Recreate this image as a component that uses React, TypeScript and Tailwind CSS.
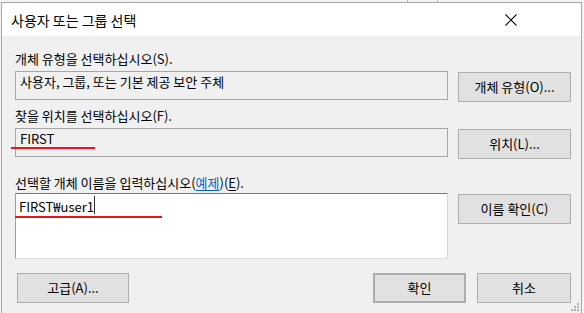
const font = { fontFamily: '"Noto Sans CJK KR", "Noto Sans", sans-serif' };

function Btn({ label, className = "" }: { label: React.ReactNode; className?: string }) {
  return (
    <button
      className={
        "h-[30px] bg-[#e1e1e1] border border-[#adadad] text-[13px] leading-[16px] text-black flex items-center justify-center " +
        className
      }
    >
      {label}
    </button>
  );
}

export default function App() {
  return (
    <div className="w-[584px] h-[313px] overflow-hidden bg-[#f3f3f3] relative" style={font}>
      {/* strip of the window behind */}
      <div className="h-[2px] flex">
        <div className="w-[407px]" />
        <div className="w-[1px] bg-[#b4b4b4]" />
        <div className="w-[29px]" />
        <div className="w-[1px] bg-[#b4b4b4]" />
      </div>

      <div className="ml-[1px] w-[581px] h-[311px] border-x border-t border-[#a8a8a8] flex flex-col">
        {/* title bar */}
        <div className="h-[33px] bg-white flex items-center justify-between pl-[9px] pr-[64px]">
          <span className="text-[14px] leading-[20px] text-black">사용자 또는 그룹 선택</span>
          <svg width="12" height="12" viewBox="0 0 12 12" className="shrink-0">
            <path d="M0.5 0.5 L11.5 11.5 M11.5 0.5 L0.5 11.5" stroke="#111" strokeWidth="1.1" />
          </svg>
        </div>

        {/* body */}
        <div className="flex-1 bg-[#f0f0f0] pl-[13px] pr-[10px] pt-[15px] flex flex-col relative text-black">
          <div className="text-[13px] leading-[16px] mb-[4px]">개체 유형을 선택하십시오(S).</div>
          <div className="flex gap-[10px] items-start">
            <div className="w-[433px] h-[29px] border border-[#a6a6a6] bg-[#f0f0f0] pl-[4px] pt-[2px] text-[13px] leading-[16px]">
              사용자, 그룹, 또는 기본 제공 보안 주체
            </div>
            <Btn label="개체 유형(O)..." className="mt-[1px] w-[113px]" />
          </div>

          <div className="text-[13px] leading-[16px] mt-[6px] mb-[4px]">찾을 위치를 선택하십시오(F).</div>
          <div className="flex gap-[10px] items-start">
            <div className="relative w-[433px] h-[29px] border border-[#a6a6a6] bg-[#f0f0f0] pl-[4px] pt-[2px] text-[13px] leading-[16px]">
              FIRST
              <div className="absolute left-[-5px] top-[18px] w-[84px] h-[2px] bg-[#e8141c]" />
            </div>
            <Btn label="위치(L)..." className="mt-[1px] w-[113px]" />
          </div>

          <div className="text-[13px] leading-[16px] mt-[16px] mb-[2px]">
            선택할 개체 이름을 입력하십시오(<span className="text-[#0066cc] underline underline-offset-2">예제</span>)(
            <span className="underline underline-offset-2">E</span>).
          </div>
          <div className="flex gap-[10px] items-start">
            <div className="relative w-[433px] h-[66px] bg-white border border-t-[#777777] border-l-[#a0a0a0] border-r-[#dadada] border-b-[#dadada] pl-[3px] pt-[5px] text-[13px] leading-[16px]">
              FIRST₩user1
              <div className="absolute left-[78px] top-[2px] w-[1px] h-[18px] bg-[#333]" />
              <div className="absolute left-[-1px] top-[22px] w-[147px] h-[2px] bg-[#e8141c]" />
            </div>
            <Btn label="이름 확인(C)" className="mt-[1px] w-[113px]" />
          </div>

          <div className="flex items-start mt-[14px]">
            <Btn label="고급(A)..." className="ml-[2px] w-[112px]" />
            <div className="ml-auto flex gap-[11px]">
              <Btn label="확인" className="w-[93px] border-2 border-[#0078d7]" />
              <Btn label="취소" className="w-[94px]" />
            </div>
          </div>

          {/* resize grip */}
          <svg width="9" height="9" viewBox="0 0 9 9" className="absolute right-[1px] bottom-[1px]">
            <g fill="#b0b0b0">
              <rect x="6" y="0" width="2" height="2" />
              <rect x="3" y="3" width="2" height="2" />
              <rect x="6" y="3" width="2" height="2" />
              <rect x="0" y="6" width="2" height="2" />
              <rect x="3" y="6" width="2" height="2" />
              <rect x="6" y="6" width="2" height="2" />
            </g>
          </svg>
        </div>
      </div>
    </div>
  );
}
